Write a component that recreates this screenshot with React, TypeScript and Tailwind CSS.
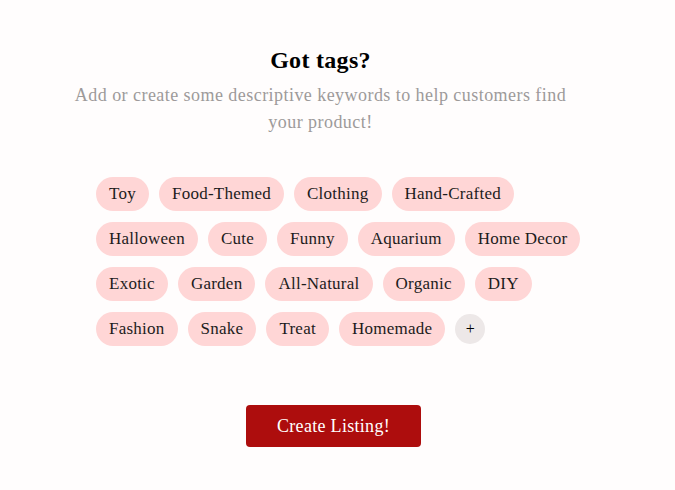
const tags = [
  "Toy",
  "Food-Themed",
  "Clothing",
  "Hand-Crafted",
  "Halloween",
  "Cute",
  "Funny",
  "Aquarium",
  "Home Decor",
  "Exotic",
  "Garden",
  "All-Natural",
  "Organic",
  "DIY",
  "Fashion",
  "Snake",
  "Treat",
  "Homemade",
];

export default function App() {
  return (
    <div className="min-h-[490px] w-full bg-[#fffdfd] font-['Liberation_Serif',serif] text-[#1a1a1a]">
      <div className="flex flex-col items-center pt-[44px] pr-[34px]">
        <h1 className="text-[24px] font-bold leading-[32px] tracking-[0.3px] text-black">Got tags?</h1>
        <p className="mt-[6px] w-[510px] text-center text-[18px] leading-[27px] tracking-[0.45px] text-[#9d9a9a]">
          Add or create some descriptive keywords to help customers find your product!
        </p>
      </div>

      <div className="ml-[96px] mt-[41px] flex w-[505px] flex-wrap items-center gap-x-[10px] gap-y-[11px]">
        {tags.map((tag) => (
          <span
            key={tag}
            className="flex h-[34px] items-center rounded-full bg-[#ffd6d6] px-[13px] text-[17px] tracking-[0.25px] text-[#1c1c1c]"
          >
            {tag}
          </span>
        ))}
        <button
          type="button"
          className="flex h-[30px] w-[30px] items-center justify-center rounded-full bg-[#ede8e8] text-[16px] leading-none text-black"
        >
          +
        </button>
      </div>

      <div className="mt-[59px] flex justify-center">
        <button
          type="button"
          className="ml-[-8px] h-[42px] w-[175px] rounded-[4px] bg-[#ad0d0d] text-[18px] tracking-[0.3px] text-white"
        >
          Create Listing!
        </button>
      </div>
    </div>
  );
}
